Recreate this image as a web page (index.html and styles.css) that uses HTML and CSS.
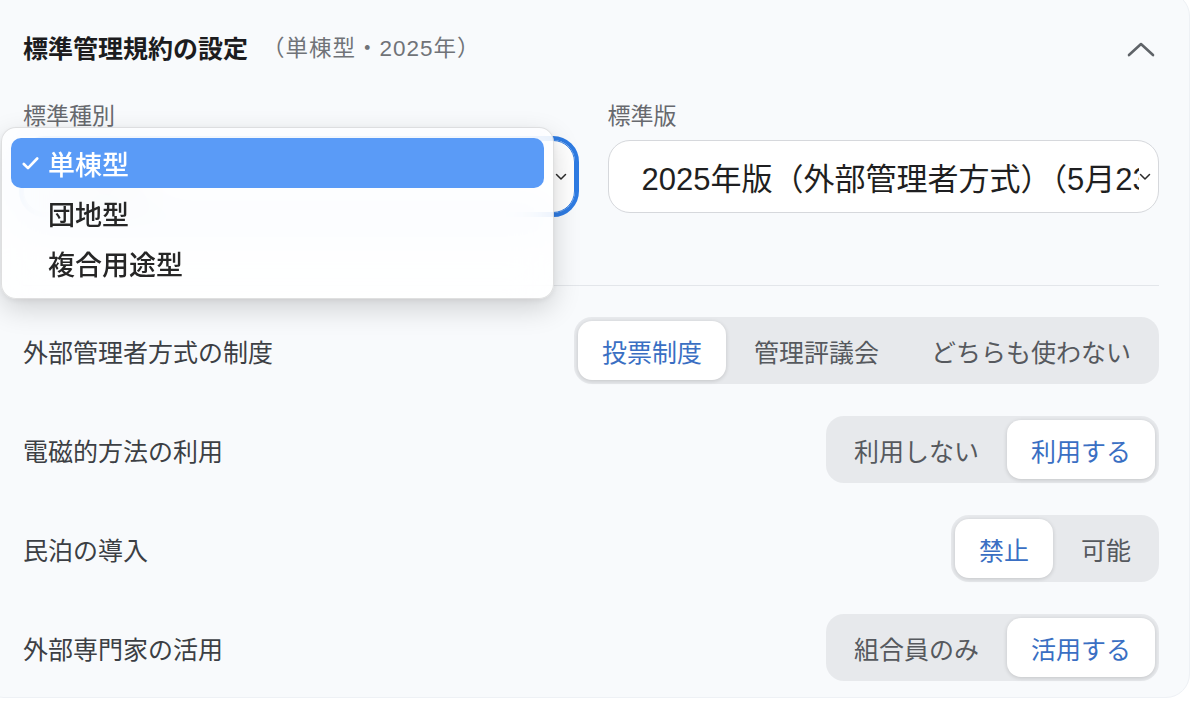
FILE: index.html
```html
<!DOCTYPE html>
<html lang="ja">
<head>
<meta charset="utf-8">
<title>標準管理規約の設定</title>
<link rel="stylesheet" href="styles.css">
</head>
<body>
<section class="card">
  <div class="header">
    <h2 class="title">標準管理規約の設定<span class="sub">（単棟型・2025年）</span></h2>
    <svg class="collapse" width="28" height="16" viewBox="0 0 28 16"><polyline points="2,14 14,3 26,14" fill="none" stroke="#5f6368" stroke-width="2.6" stroke-linecap="round" stroke-linejoin="round"/></svg>
  </div>

  <div class="selects">
    <div class="field">
      <div class="label">標準種別</div>
      <div class="select focus">
        <span class="val under">単棟型</span>
        <svg class="caret" width="12" height="8" viewBox="0 0 12 8"><polyline points="1.5,1.5 6,6 10.5,1.5" fill="none" stroke="#2b2b2b" stroke-width="1.5" stroke-linecap="round" stroke-linejoin="round"/></svg>
      </div>
      <div class="menu">
        <div class="item active">
          <span class="check"><svg width="17" height="13" viewBox="0 0 17 13"><polyline points="1.8,7 6,11.2 15.2,1.5" fill="none" stroke="#fff" stroke-width="2.6" stroke-linecap="round" stroke-linejoin="round"/></svg></span>
          <span>単棟型</span>
        </div>
        <div class="item"><span class="check"></span><span>団地型</span></div>
        <div class="item"><span class="check"></span><span>複合用途型</span></div>
      </div>
    </div>
    <div class="field">
      <div class="label">標準版</div>
      <div class="select">
        <span class="val">2025年版（外部管理者方式）（5月23日公表）</span>
        <svg class="caret" width="12" height="8" viewBox="0 0 12 8"><polyline points="1.5,1.5 6,6 10.5,1.5" fill="none" stroke="#2b2b2b" stroke-width="1.5" stroke-linecap="round" stroke-linejoin="round"/></svg>
      </div>
    </div>
  </div>

  <div class="divider"></div>

  <div class="rows">
    <div class="row">
      <div class="row-label">外部管理者方式の制度</div>
      <div class="seg">
        <span class="opt on">投票制度</span>
        <span class="opt">管理評議会</span>
        <span class="opt">どちらも使わない</span>
      </div>
    </div>
    <div class="row">
      <div class="row-label">電磁的方法の利用</div>
      <div class="seg">
        <span class="opt">利用しない</span>
        <span class="opt on">利用する</span>
      </div>
    </div>
    <div class="row">
      <div class="row-label">民泊の導入</div>
      <div class="seg">
        <span class="opt on">禁止</span>
        <span class="opt">可能</span>
      </div>
    </div>
    <div class="row">
      <div class="row-label">外部専門家の活用</div>
      <div class="seg">
        <span class="opt">組合員のみ</span>
        <span class="opt on">活用する</span>
      </div>
    </div>
  </div>
</section>
</body>
</html>
```

FILE: styles.css
```css
* { box-sizing: border-box; }
html, body { margin: 0; padding: 0; }
body {
  background: #ffffff;
  font-family: "Liberation Sans", "Noto Sans CJK JP", sans-serif;
  width: 1200px;
  height: 705px;
  overflow: hidden;
}
.card {
  margin: -8px 10px 0 -20px;
  padding: 27px 30px 16px 42px;
  background: #f8fafc;
  border: 1px solid #eef1f5;
  border-radius: 24px;
}
.header {
  height: 58px;
  display: flex;
  align-items: center;
  justify-content: space-between;
}
.title {
  margin: 0;
  font-size: 25px;
  line-height: 1;
  font-weight: 700;
  color: #1c1c1e;
  display: flex;
  align-items: center;
}
.sub {
  margin-left: 14px;
  font-size: 22.5px;
  letter-spacing: 1px;
  font-weight: 400;
  color: #707378;
}
.collapse { margin-right: 4px; }

.selects {
  margin-top: 22px;
  display: grid;
  grid-template-columns: minmax(0, 1fr) minmax(0, 1fr);
  column-gap: 33px;
}
.field { position: relative; min-width: 0; }
.label {
  font-size: 23px;
  line-height: 32px;
  color: #67696e;
}
.select {
  margin-top: 8px;
  height: 73px;
  background: #ffffff;
  border: 1.5px solid #d6d8dc;
  border-radius: 22px;
  display: flex;
  align-items: center;
  padding-left: 33px;
  padding-right: 7px;
}
.select.focus {
  border-color: #2e7be2;
  outline: 4px solid #2e7be2;
}
.val {
  flex: 1;
  min-width: 0;
  overflow: hidden;
  white-space: nowrap;
  font-size: 31px;
  color: #1f1f21;
}
.val.under { color: #9aa0a8; }
.caret { flex: none; }

.menu {
  position: absolute;
  left: -22px;
  top: 27px;
  width: 553px;
  padding: 10px 9px;
  background: rgba(255, 255, 255, 0.84);
  backdrop-filter: blur(22px);
  border: 1px solid rgba(0, 0, 0, 0.12);
  border-radius: 15px;
  box-shadow: 0 10px 28px rgba(0, 0, 0, 0.16), 0 2px 6px rgba(0, 0, 0, 0.06);
  z-index: 5;
}
.item {
  height: 50px;
  display: flex;
  align-items: center;
  border-radius: 10px;
  font-size: 27px;
  font-weight: 500;
  color: #262626;
}
.item.active {
  background: #5a9bf7;
  color: #ffffff;
}
.check {
  width: 37px;
  padding-left: 11px;
  display: flex;
  align-items: center;
}

.divider {
  margin-top: 72px;
  height: 1px;
  background: #e3e6ea;
}

.rows {
  margin-top: 31px;
  display: flex;
  flex-direction: column;
  gap: 32px;
}
.row {
  height: 67px;
  display: flex;
  align-items: center;
  justify-content: space-between;
}
.row-label {
  font-size: 25px;
  color: #3c3f44;
}
.seg {
  height: 67px;
  display: flex;
  gap: 4px;
  padding: 4px;
  background: #e7e9ec;
  border-radius: 18px;
}
.opt {
  display: flex;
  align-items: center;
  padding: 0 24px;
  font-size: 25px;
  color: #56595e;
  border-radius: 14px;
}
.opt.on {
  background: #ffffff;
  color: #3a6fc3;
  box-shadow: 0 1px 4px rgba(0, 0, 0, 0.16);
}
```
